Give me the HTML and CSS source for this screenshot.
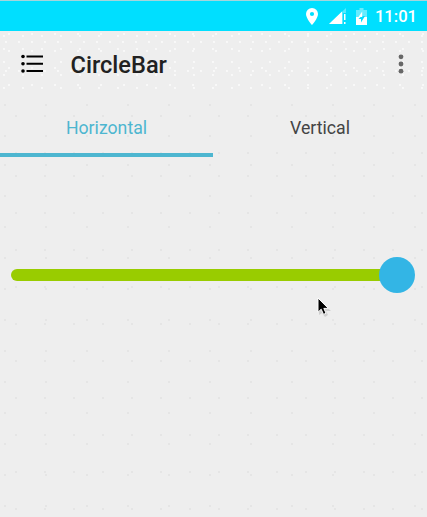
FILE: index.html
```html
<!DOCTYPE html>
<html lang="en">
<head>
<meta charset="utf-8">
<title>CircleBar</title>
<link rel="stylesheet" href="styles.css">
</head>
<body>
<div class="status">
  <svg class="pin" width="12" height="17" viewBox="0 0 12 17"><path fill="#fff" fill-rule="evenodd" d="M6 0a6 6 0 0 0-6 6c0 4.400 6 11 6 11s6-6.600 6-11a6 6 0 0 0-6-6zm0 3.900a2.100 2.100 0 1 1 0 4.200a2.100 2.100 0 0 1 0-4.200z"/></svg>
  <svg class="signal" width="18" height="17" viewBox="0 0 18 17"><path fill="#fff" opacity=".35" d="M17 0v5h-3v11H0z"/><path fill="#fff" d="M0 16L13 3.500V16zM15 6h1.500v6H15zM15 14h1.500v2H15z"/></svg>
  <svg class="battery" width="11" height="17" viewBox="0 0 11 17"><path fill="#fff" opacity=".4" d="M3.500 0h4v2H11v7H0V2h3.500z"/><path fill="#fff" d="M0 9h11v8H0z"/><path fill="#00dfff" d="M4.500 9H6.200v-1H9L5 14.500V11H2.500z"/><path fill="#fff" d="M2.500 9L6.200 3.500V9z"/></svg>
  <span class="clock">11:01</span>
</div>
<header class="toolbar">
  <svg class="menu" width="24" height="20" viewBox="0 0 24 20"><g><circle cx="2" cy="2.500" r="1.800"/><circle cx="2" cy="9.700" r="1.800"/><circle cx="2" cy="17" r="1.800"/><path d="M5.500 1.500H22v2H5.500zM5.500 8.700H22v2H5.500zM5.500 16H22v2H5.500z"/></g></svg>
  <h1 class="title">CircleBar</h1>
  <svg class="more" width="6" height="20" viewBox="0 0 6 20"><g fill="#676767"><circle cx="3" cy="2.800" r="2.400"/><circle cx="3" cy="10" r="2.400"/><circle cx="3" cy="17.200" r="2.400"/></g></svg>
</header>
<nav class="tabs">
  <div class="tab active">Horizontal</div>
  <div class="tab">Vertical</div>
</nav>
<main class="content">
  <div class="slider"><div class="track"></div><div class="thumb"></div></div>
  <svg class="cursor" width="14" height="20" viewBox="0 0 14 20"><path fill="#bbb" opacity=".6" d="M2 3v15l3-2 3 4 3-2-2-4h5z"/><path fill="#000" stroke="#fff" stroke-width="1" d="M1 1v14.200l3.200-3 2.300 5.200 2.500-1.200-2.200-4.800h4.500z"/></svg>
</main>
</body>
</html>
```
FILE: styles.css
```css
* { box-sizing: border-box; }
body {
  margin: 0;
  height: 517px;
  overflow: hidden;
  background: #eee;
  font-family: Roboto, sans-serif;
}
.status {
  height: 31px;
  background: #00dfff;
  border-top: 1px solid #a5d5dc;
  display: flex;
  align-items: center;
  justify-content: flex-end;
  padding-right: 10px;
  color: #fff;
}
.pin { margin-right: 11px; }
.signal { margin-right: 9px; }
.battery { margin-right: 8px; }
.clock { font-size: 16.6px; line-height: 20px; font-weight: 500; padding-top: 2px; }
.toolbar {
  height: 66px;
  display: flex;
  align-items: center;
  padding: 0 23px 0 21px;
  background-color: #eee;
  background-image:
    radial-gradient(circle at 4px 5px, #f8f8f8 0.7px, transparent 1px),
    radial-gradient(circle at 9px 3px, #f8f8f8 0.7px, transparent 1px),
    radial-gradient(circle at 6px 11px, #f8f8f8 0.7px, transparent 1px);
  background-size: 19px 13px, 23px 17px, 13px 29px;
}
.menu { margin-right: 25.5px; }
.title {
  flex: 1;
  margin: 2px 0 0;
  font-size: 23.6px;
  line-height: 28px;
  font-weight: 500;
  color: #212121;
}
.tabs {
  height: 60px;
  display: grid;
  grid-template-columns: 213px 1fr;
}
.tab {
  border-bottom: 4px solid transparent;
  text-align: center;
  font-size: 17.7px;
  line-height: 62px;
  height: 60px;
  color: #444;
}
.active { color: #4db6d0; border-color: #4db6d0; }
.tabs, .content {
  background-image:
    radial-gradient(circle at 16px 19px, #dedede 0.5px, transparent 1px),
    radial-gradient(circle at 5px 8px, #dedede 0.5px, transparent 1px);
  background-size: 29px 37px, 41px 31px;
}
.content { height: 360px; padding: 100px 12px 0 11px; }
.slider { display: flex; align-items: center; height: 36px; }
.track {
  flex: 1;
  height: 12px;
  margin-right: -6px;
  border-radius: 6px 0 0 6px;
  background: #9c0;
}
.thumb {
  width: 36px;
  height: 36px;
  border-radius: 50%;
  background: #33b5e5;
}
.cursor { display: block; margin: 4px 0 0 306px; }
```
